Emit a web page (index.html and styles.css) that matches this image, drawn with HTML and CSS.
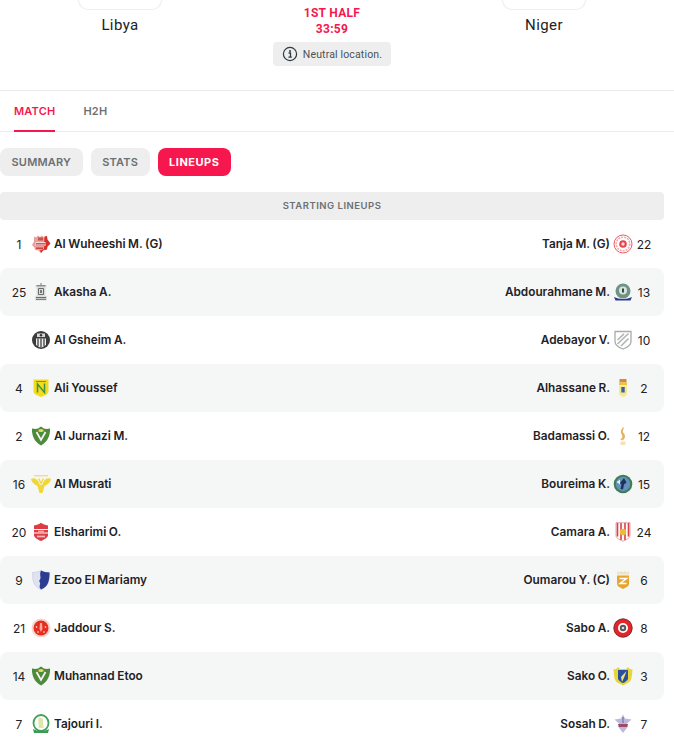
FILE: index.html
```html
<!DOCTYPE html>
<html lang="en">
<head>
<meta charset="utf-8">
<title>Libya v Niger</title>
<link rel="stylesheet" href="styles.css">
</head>
<body>
<header class="match">
  <div class="team"><div class="logo-box"></div><div class="team-name">Libya</div></div>
  <div class="status">
    <div class="period">1ST HALF</div>
    <div class="clock">33:59</div>
    <div class="note">
      <svg class="info" viewBox="0 0 16 16"><circle cx="8" cy="8" r="6.6" fill="none" stroke="#2d3a40" stroke-width="1.2"/><path d="M6.6 7h1.9v4M6.4 11.2h3.4" fill="none" stroke="#2d3a40" stroke-width="1.3"/><circle cx="8" cy="4.9" r="1" fill="#2d3a40"/></svg>
      <span>Neutral location.</span>
    </div>
  </div>
  <div class="team"><div class="logo-box"></div><div class="team-name">Niger</div></div>
</header>
<nav class="tabs">
  <a class="tab active">MATCH</a>
  <a class="tab">H2H</a>
</nav>
<div class="pills">
  <a class="pill">SUMMARY</a>
  <a class="pill">STATS</a>
  <a class="pill on">LINEUPS</a>
</div>
<section class="lineups">
  <h2 class="head">STARTING LINEUPS</h2>

  <div class="row">
    <div class="side"><span class="num">1</span>
      <svg class="crest" viewBox="0 0 20 20"><path d="M3 2.500l2 1 2-2 2 1.500 2-1.500 2 2 2.500-1 .5 3.500 3 4-3 3-.5 3-3.500.5L10 19l-2.500-2.500-3.500-.5-.5-2.500L1 11l2-3.500z" fill="#e7a09b"/><path d="M13.500 2.500l2.500-.5.500 3.500 3 4-3 3-.5 3-3.500.5L10 19l-1-2.500 4-1.500z" fill="#d5302b"/><path d="M4.500 8h10v4h-10z" fill="#f7dedc"/><path d="M5 9.500h9M5 11h9" stroke="#d5433e" stroke-width=".9"/><path d="M7 3.500h5v3H7z" fill="#c9534e"/><path d="M5 13.500h7v1.500H5z" fill="#d5433e"/></svg>
      <span class="name">Al Wuheeshi M. (G)</span></div>
    <div class="side end"><span class="name">Tanja M. (G)</span>
      <svg class="crest" viewBox="0 0 20 20"><circle cx="10" cy="10" r="9" fill="#fff" stroke="#ea5a60" stroke-width="1"/><circle cx="10" cy="10" r="6.800" fill="none" stroke="#f4a9ac" stroke-width="1.600" stroke-dasharray="2 1"/><circle cx="10" cy="10" r="3.800" fill="#e8444a"/><circle cx="10" cy="10" r="1.700" fill="#fbdcdd"/></svg>
      <span class="num">22</span></div>
  </div>

  <div class="row alt">
    <div class="side"><span class="num">25</span>
      <svg class="crest" viewBox="0 0 20 20"><path d="M4.500 3h11v2h-1v9h1.500v4.500H4V14h1.500V5h-1z" fill="#dcdddd"/><path d="M5.500 3.800h9M7.500 6.500h5v6h-5zM5 15.500h10M5 17.300h10" fill="none" stroke="#6a6a6a" stroke-width="1"/><path d="M10 1v2" stroke="#777"/><path d="M9 8h2v3H9z" fill="#777"/></svg>
      <span class="name">Akasha A.</span></div>
    <div class="side end"><span class="name">Abdourahmane M.</span>
      <svg class="crest" viewBox="0 0 20 20"><circle cx="10" cy="9" r="7.500" fill="#6f9484"/><circle cx="10" cy="8.500" r="4" fill="#d8e3de"/><path d="M9 6.500h2v4H9z" fill="#2d4d44"/><path d="M1 15c5 2.500 13 2.500 18 0l-1.500 3.500h-15z" fill="#2f3a8c"/></svg>
      <span class="num">13</span></div>
  </div>

  <div class="row">
    <div class="side"><span class="num"></span>
      <svg class="crest" viewBox="0 0 20 20"><circle cx="10" cy="10" r="9" fill="#3b3b3b"/><path d="M6 3.500h8v3.500H6z" fill="#d8d8d8"/><path d="M5 8.500h10V15l-5 3-5-3z" fill="#efefef"/><path d="M7 8.500v7.500M10 8.500v9.500M13 8.500v7.500" stroke="#333" stroke-width="1.200"/><circle cx="10" cy="5.300" r="1.200" fill="#333"/></svg>
      <span class="name">Al Gsheim A.</span></div>
    <div class="side end"><span class="name">Adebayor V.</span>
      <svg class="crest" viewBox="0 0 20 20"><path d="M2 1.500h16v10c0 3.500-4 6-8 7.500-4-1.500-8-4-8-7.500z" fill="#fff" stroke="#a9acac" stroke-width="1.300"/><path d="M4.500 14L15.500 3.500M4.500 10L11 3.800M8 16l7.500-7.500" stroke="#b4b7b7" stroke-width="1.700"/></svg>
      <span class="num">10</span></div>
  </div>

  <div class="row alt">
    <div class="side"><span class="num">4</span>
      <svg class="crest" viewBox="0 0 20 20"><path d="M2.500 1.500h15v12c0 2.500-4 4-7.500 5.500-3.500-1.500-7.500-3-7.500-5.500z" fill="#f3dc1d"/><path d="M6.500 14.500V6l7 8.500V5.500" fill="none" stroke="#3f9144" stroke-width="1.500"/><path d="M5 3.500h10" stroke="#7f8f2c" stroke-width="1"/></svg>
      <span class="name">Ali Youssef</span></div>
    <div class="side end"><span class="name">Alhassane R.</span>
      <svg class="crest" viewBox="0 0 20 20"><path d="M6.500 1h7v3.500h-7z" fill="#d98a2c"/><path d="M6 4.500h8v2.500H6z" fill="#e9c34a"/><path d="M6 7.500h8v7.500c0 2-2 3-4 4-2-1-4-2-4-4z" fill="#f6e88c"/><path d="M8.300 9h3.400v5.500H8.300z" fill="#3b5fa8"/></svg>
      <span class="num">2</span></div>
  </div>

  <div class="row">
    <div class="side"><span class="num">2</span>
      <svg class="crest" viewBox="0 0 20 20"><path d="M1 2.500C5 3.500 7 3 10 .5c3 2.500 5 3 9 2 .5 7-2.500 13.500-9 17C3.500 16 .5 9.500 1 2.500z" fill="#4e8a3a"/><path d="M5.500 6l4.500 8 4.500-8" fill="none" stroke="#f2f3ee" stroke-width="1.800"/><ellipse cx="10" cy="4.500" rx="2.700" ry="1.600" fill="#e7d66d"/></svg>
      <span class="name">Al Jurnazi M.</span></div>
    <div class="side end"><span class="name">Badamassi O.</span>
      <svg class="crest" viewBox="0 0 20 20"><path d="M10.500 1c1 2.500-2 4 0 6 2.500 2.500 1.500 6-1 7.500l-2.500-1.500c2.500 0 3-3 1.500-5-1.500-2.500 0-5 2-7z" fill="#e2b25e"/><path d="M7.500 15.500h5v3.500h-5z" fill="#f2e2bd"/></svg>
      <span class="num">12</span></div>
  </div>

  <div class="row alt">
    <div class="side"><span class="num">16</span>
      <svg class="crest" viewBox="0 0 20 20"><path d="M0 5c2.500-1.500 5.500-.5 7 2 .8 1.500 1.500 2 1.800 4H11.200c.3-2 1-2.500 1.800-4 1.500-2.500 4.500-3.500 7-2-.5 3-3 5.500-6.500 7L11.500 19h-3l-2-7C3 10.500.5 8 0 5z" fill="#f1d736"/><path d="M7.700 4.500L10 9.500l2.300-5" fill="none" stroke="#f1d736" stroke-width="1.300"/><path d="M3 1.800h14" stroke="#e7d56a" stroke-width="1"/></svg>
      <span class="name">Al Musrati</span></div>
    <div class="side end"><span class="name">Boureima K.</span>
      <svg class="crest" viewBox="0 0 20 20"><circle cx="10" cy="10" r="9.300" fill="#3f7d55"/><circle cx="10" cy="10" r="7.200" fill="#6690c0"/><path d="M11 4l2.500 4.500-2.500 2-1 5-2.500-.5 1-4.500L7 9z" fill="#1c3458"/><path d="M3.500 8l3.500-2.500v5z" fill="#e4ecf2"/></svg>
      <span class="num">15</span></div>
  </div>

  <div class="row">
    <div class="side"><span class="num">20</span>
      <svg class="crest" viewBox="0 0 20 20"><path d="M3 3.500C6 3 8 2 10 .7c2 1.300 4 2.300 7 2.800V13c0 2.500-3.500 4.500-7 6-3.500-1.500-7-3.500-7-6z" fill="#dc3c42"/><path d="M3 7.500h14M3 11h14" stroke="#fff" stroke-width="1.200"/><path d="M6 14.500h8" stroke="#f5b9bb" stroke-width="1.700"/><path d="M7 9.200h6" stroke="#f9d5d6" stroke-width="1"/></svg>
      <span class="name">Elsharimi O.</span></div>
    <div class="side end"><span class="name">Camara A.</span>
      <svg class="crest" viewBox="0 0 20 20"><path d="M3 .7h14v13c0 2.500-3.500 4-7 5.500-3.500-1.500-7-3-7-5.500z" fill="#fff" stroke="#e1646a" stroke-width=".6"/><path d="M4.500 1v13.500M8 1v17M12 1v17M15.500 1v13.500" stroke="#d9404a" stroke-width="1.600"/><circle cx="10" cy="10" r="3.300" fill="#edbb3c"/></svg>
      <span class="num">24</span></div>
  </div>

  <div class="row alt">
    <div class="side"><span class="num">9</span>
      <svg class="crest" viewBox="0 0 20 20"><path d="M1.500 2.500c3.500 0 6.500-.8 8.500-2 2 1.200 5 2 8.500 2 0 8-1 14-8.500 17-7.500-3-8.500-9-8.500-17z" fill="#dfe2ef" stroke="#c3c8e0" stroke-width=".6"/><path d="M10 .5c2 1.200 5 2 8.500 2 0 8-1 14-8.500 17-1-1-2-3-1-5 1-2-2-3 0-5 1.500-2-1-5 1-9z" fill="#2c3d92"/></svg>
      <span class="name">Ezoo El Mariamy</span></div>
    <div class="side end"><span class="name">Oumarou Y. (C)</span>
      <svg class="crest" viewBox="0 0 20 20"><path d="M4 1l2 1.500L8 1l2 1.500L12 1l2 1.500L16 1v3.500H4z" fill="#f1e3c0"/><path d="M4 5.500h12V14c0 2-2.500 3.500-6 5-3.500-1.500-6-3-6-5z" fill="#e6a52f"/><path d="M6.500 8.500h7L7 13.500h6.500" fill="none" stroke="#fff" stroke-width="1.500"/></svg>
      <span class="num">6</span></div>
  </div>

  <div class="row">
    <div class="side"><span class="num">21</span>
      <svg class="crest" viewBox="0 0 20 20"><circle cx="10" cy="10" r="9.500" fill="#f6d5d1"/><circle cx="10" cy="10" r="7.500" fill="#e62d20"/><path d="M9 5h2l.5 6-1.500 3-1.500-3z" fill="#f7a9a2"/><circle cx="5.500" cy="9" r=".8" fill="#fff"/><circle cx="14.500" cy="9" r=".8" fill="#fff"/><circle cx="7" cy="14" r=".8" fill="#fff"/><circle cx="13" cy="14" r=".8" fill="#fff"/></svg>
      <span class="name">Jaddour S.</span></div>
    <div class="side end"><span class="name">Sabo A.</span>
      <svg class="crest" viewBox="0 0 20 20"><circle cx="10" cy="10" r="9.500" fill="#e5232a"/><circle cx="10" cy="10" r="9.200" fill="none" stroke="#333" stroke-width=".6"/><circle cx="10" cy="10" r="5" fill="#fff"/><circle cx="10" cy="10" r="3.200" fill="#555"/><circle cx="10" cy="10" r="1.300" fill="#ddd"/></svg>
      <span class="num">8</span></div>
  </div>

  <div class="row alt">
    <div class="side"><span class="num">14</span>
      <svg class="crest" viewBox="0 0 20 20"><path d="M1 2.500C5 3.500 7 3 10 .5c3 2.500 5 3 9 2 .5 7-2.500 13.500-9 17C3.500 16 .5 9.500 1 2.500z" fill="#4e8a3a"/><path d="M5.500 6l4.500 8 4.500-8" fill="none" stroke="#f2f3ee" stroke-width="1.800"/><ellipse cx="10" cy="4.500" rx="2.700" ry="1.600" fill="#e7d66d"/></svg>
      <span class="name">Muhannad Etoo</span></div>
    <div class="side end"><span class="name">Sako O.</span>
      <svg class="crest" viewBox="0 0 20 20"><path d="M.5 3c2 .5 3 0 4.500-2L7 3h6l2-2c1.500 2 2.500 2.500 4.500 2-.5 6-.5 10-3 13l-6.500 3.500L3.500 16C1 13 1 9 .5 3z" fill="#e9d53a"/><path d="M5 4h10v9c-1.500 2-3 3.500-5 4-2-.5-3.500-2-5-4z" fill="#2a4f9d"/><path d="M13.500 5L8 11l1 5 2.500-5.500z" fill="#efe278"/></svg>
      <span class="num">3</span></div>
  </div>

  <div class="row">
    <div class="side"><span class="num">7</span>
      <svg class="crest" viewBox="0 0 20 20"><ellipse cx="10" cy="9" rx="7.500" ry="8" fill="#fff" stroke="#43a05c" stroke-width="1.800"/><path d="M8 3.500c2.500-.5 4.500 1 4 3-.5 3 1 5 .5 7.500H7.500C8.500 11 6 7 8 3.500z" fill="#dbe8a8"/><path d="M2 15c4 2.500 12 2.500 16 0l-1 4H3z" fill="#3d9955"/></svg>
      <span class="name">Tajouri I.</span></div>
    <div class="side end"><span class="name">Sosah D.</span>
      <svg class="crest" viewBox="0 0 20 20"><path d="M10 .5l2 4 6.500 1-4.500 4 1 3-5 6.500-5-6.500 1-3-4.500-4 6.500-1z" fill="#bdb9da"/><path d="M5 10h10l-1 3H6z" fill="#9c4a6a"/><path d="M10 3v6" stroke="#6a6499"/></svg>
      <span class="num">7</span></div>
  </div>
</section>
</body>
</html>
```
FILE: styles.css
```css
* { box-sizing: border-box; }
html, body { margin: 0; padding: 0; }
body {
  width: 674px;
  height: 755px;
  overflow: hidden;
  background: #fff;
  color: #222226;
  font-family: Inter, "Liberation Sans", sans-serif;
}
.match {
  display: grid;
  grid-template-columns: 240px 184px 240px;
  height: 91px;
  padding-right: 10px;
  width: 674px;
  border-bottom: 1px solid #ececec;
}
.team { display: flex; flex-direction: column; align-items: center; }
.logo-box {
  width: 84px;
  height: 10px;
  border: 1px solid #eeeeee;
  border-top: 0;
  border-radius: 0 0 14px 14px;
}
.team-name {
  margin-top: 6px;
  font-family: Roboto, sans-serif;
  font-size: 15px;
  line-height: 18px;
  letter-spacing: .4px;
  color: #222226;
}
.status { display: flex; flex-direction: column; align-items: center; padding-top: 5px; }
.period, .clock {
  font-family: Roboto, sans-serif;
  font-size: 12px;
  font-weight: 700;
  line-height: 16px;
  letter-spacing: .3px;
  color: #f5174d;
}
.note {
  display: flex;
  align-items: center;
  gap: 5px;
  height: 24px;
  margin-top: 5px;
  padding: 0 9px;
  background: #eeeeee;
  border-radius: 4px;
  font-family: Roboto, sans-serif;
  font-size: 10.5px;
  letter-spacing: .15px;
  color: #4a5356;
  white-space: nowrap;
}
.info { width: 16px; height: 16px; flex: none; }
.tabs {
  display: flex;
  gap: 28px;
  height: 41px;
  padding-left: 14px;
  border-bottom: 1px solid #ececec;
}
.tab {
  height: 41px;
  padding-top: 13px;
  font-size: 11px;
  font-weight: 600;
  line-height: 14px;
  letter-spacing: .2px;
  color: #6c7072;
}
.tab.active { color: #f5174d; border-bottom: 2px solid #f5174d; }
.pills { display: flex; gap: 8px; margin-top: 16px; }
.pill {
  display: flex;
  align-items: center;
  height: 28px;
  padding: 0 11.5px;
  background: #eeeeee;
  border-radius: 8px;
  font-size: 11px;
  font-weight: 600;
  letter-spacing: .2px;
  color: #6c7072;
}
.pill.on { background: #f5174d; color: #fff; font-weight: 700; letter-spacing: .5px; }
.lineups { width: 664px; margin-top: 16px; }
.head {
  margin: 0;
  height: 28px;
  background: #eeeeee;
  border-radius: 4px;
  font-size: 9.5px;
  font-weight: 600;
  line-height: 28px;
  letter-spacing: .5px;
  text-align: center;
  color: #6c7072;
}
.row {
  display: flex;
  align-items: center;
  justify-content: space-between;
  height: 48px;
  border-radius: 8px;
}
.row.alt { background: #f5f6f6; }
.side { display: flex; align-items: center; padding-left: 7px; }
.side.end { padding: 0 9px 0 0; }
.num {
  width: 24px;
  font-size: 12px;
  text-align: center;
  color: #222226;
}
.end .num { width: 22px; }
.crest { width: 20px; height: 20px; flex: none; }
.name {
  margin: 0 0 0 3px;
  font-size: 11.8px;
  font-weight: 600;
  line-height: 16px;
  word-spacing: -.4px;
  color: #222226;
  white-space: nowrap;
}
.end .name { margin: 0 3px 0 0; }
```
